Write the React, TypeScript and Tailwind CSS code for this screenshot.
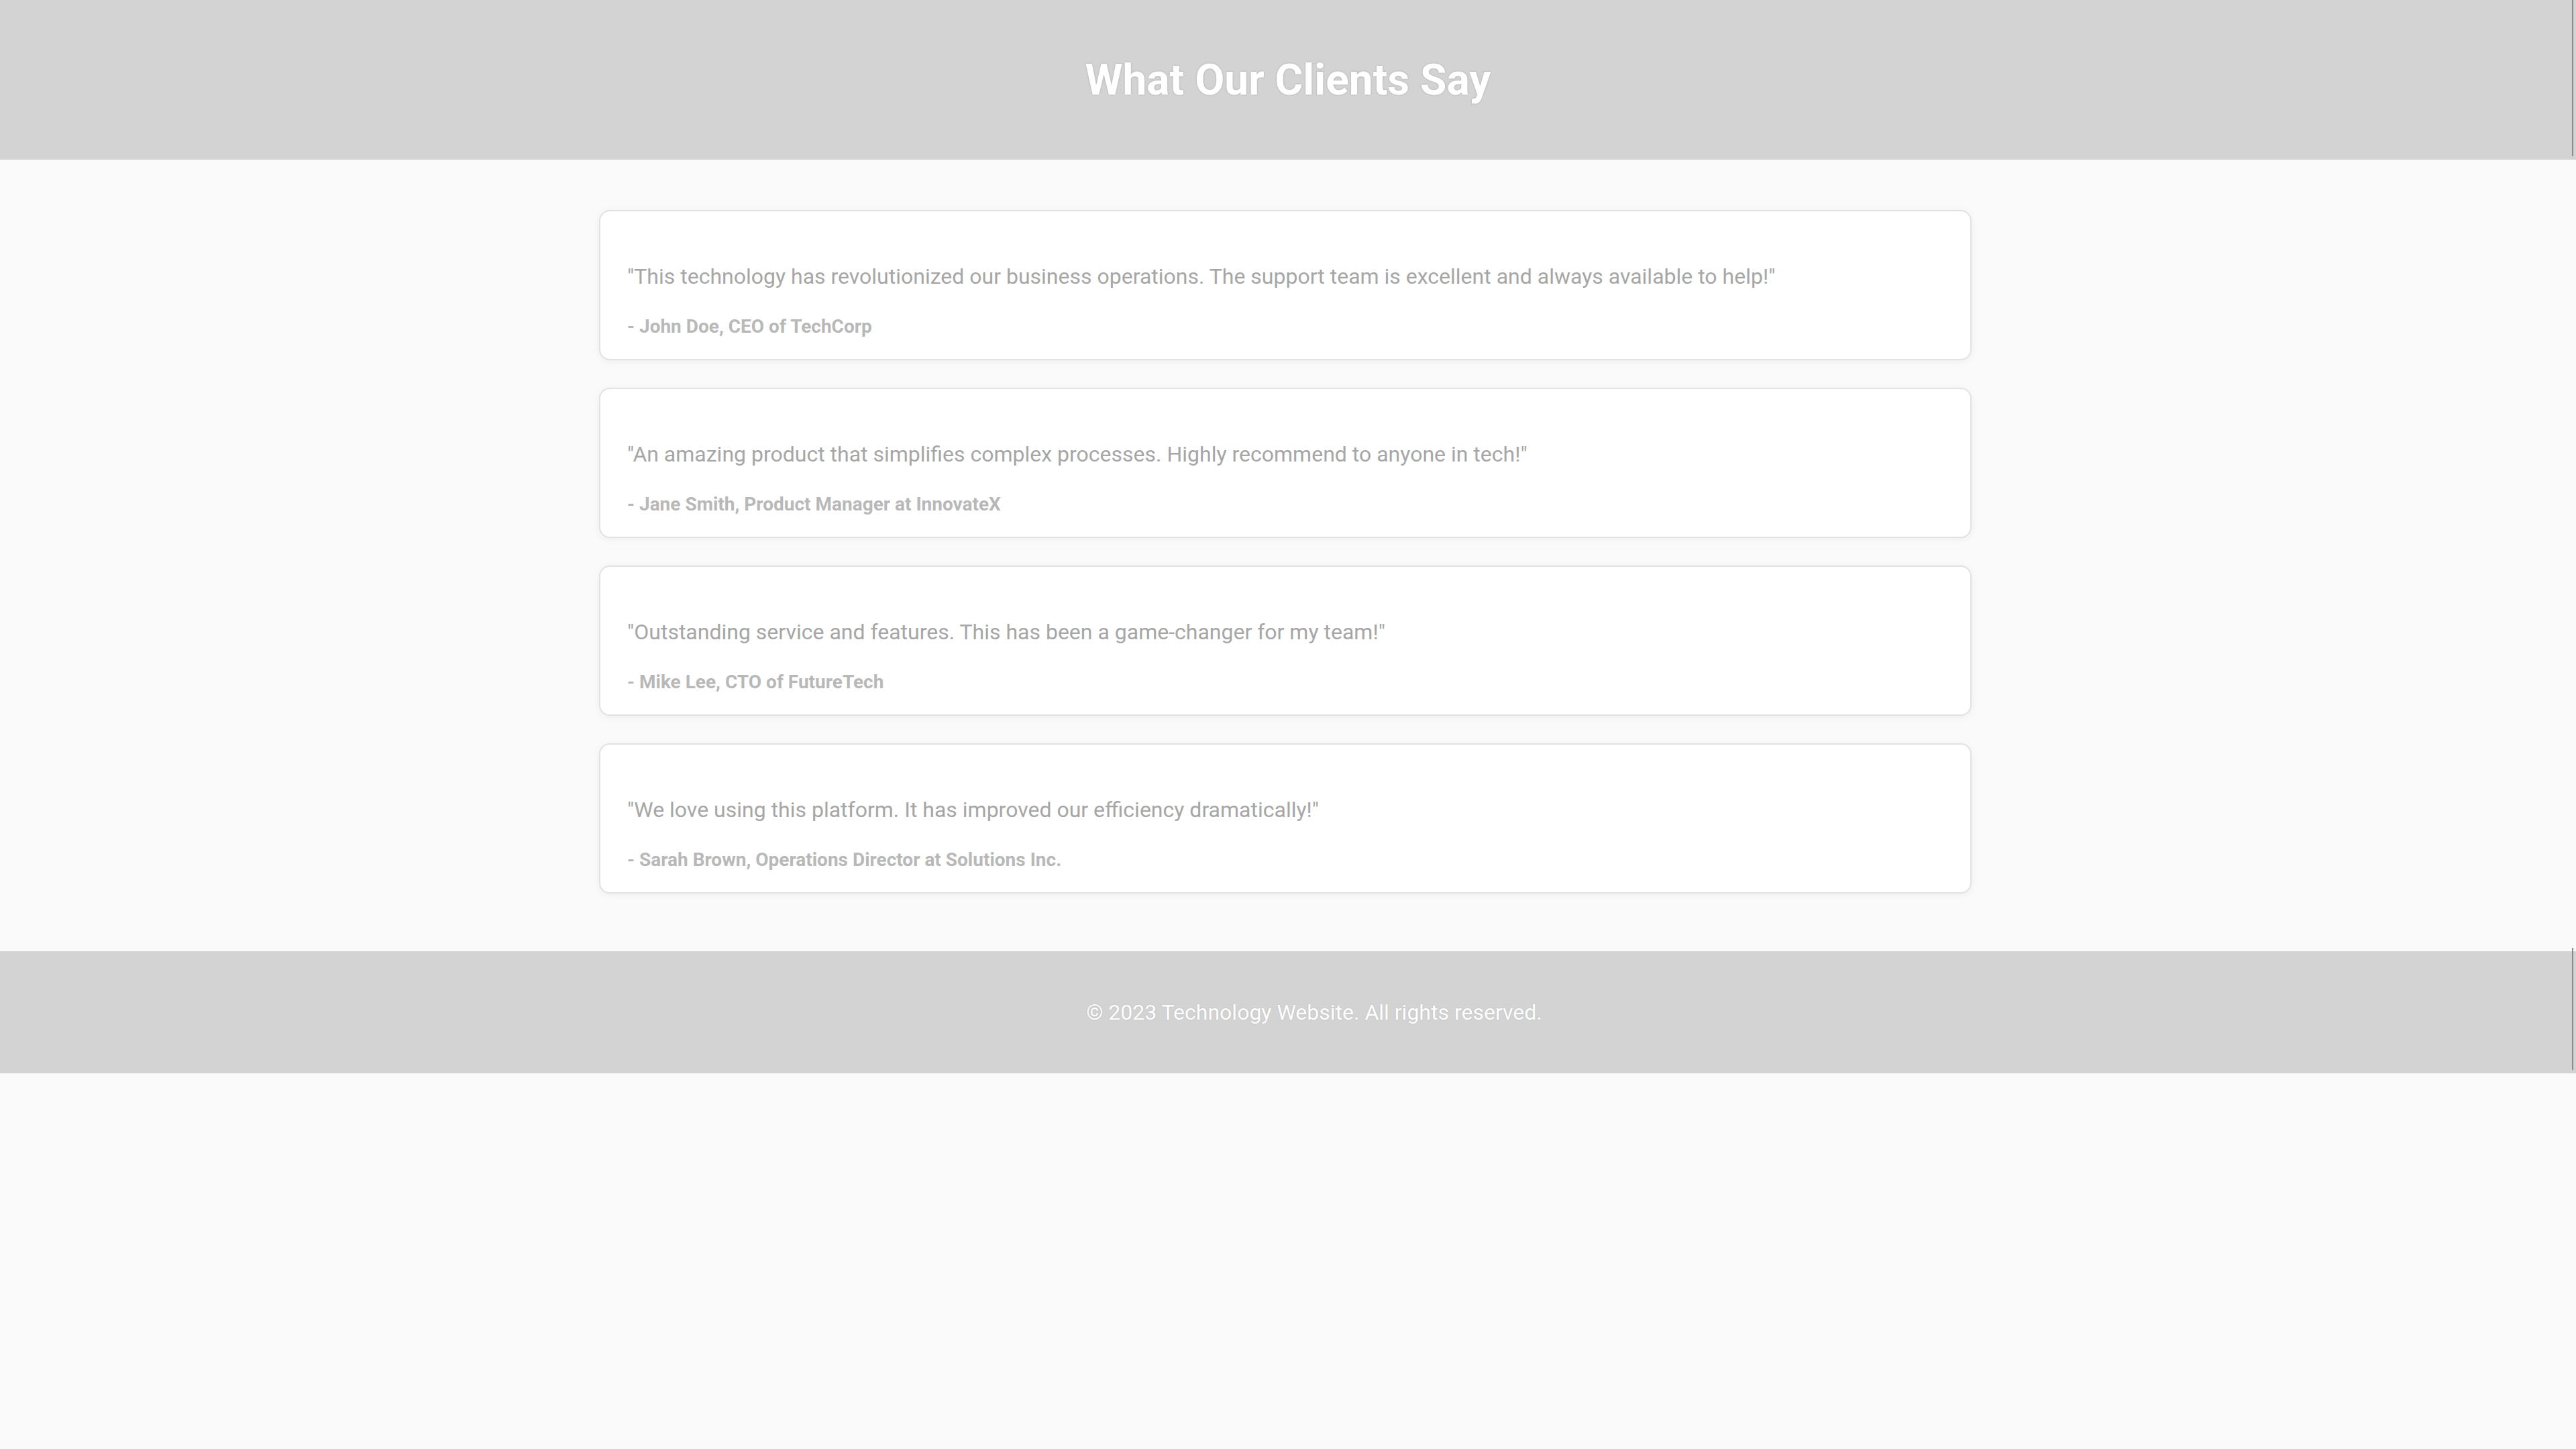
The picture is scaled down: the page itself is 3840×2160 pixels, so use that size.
import React from "react";

const testimonials = [
  {
    quote:
      '"This technology has revolutionized our business operations. The support team is excellent and always available to help!"',
    author: "- John Doe, CEO of TechCorp",
  },
  {
    quote:
      '"An amazing product that simplifies complex processes. Highly recommend to anyone in tech!"',
    author: "- Jane Smith, Product Manager at InnovateX",
  },
  {
    quote:
      '"Outstanding service and features. This has been a game-changer for my team!"',
    author: "- Mike Lee, CTO of FutureTech",
  },
  {
    quote: '"We love using this platform. It has improved our efficiency dramatically!"',
    author: "- Sarah Brown, Operations Director at Solutions Inc.",
  },
];

export default function App() {
  return (
    <div className="min-h-screen w-full bg-[#fafafa] font-['Roboto',sans-serif]">
      <header className="relative flex h-[238px] w-full items-center justify-center bg-[#d3d3d3]">
        <h1 className="text-[64px] font-bold leading-[75px] text-white [text-shadow:0_0_3px_rgba(0,0,0,0.2)]">
          What Our Clients Say
        </h1>
        <div className="absolute right-[4px] top-0 h-[233px] w-[2px] bg-[#8a8a8a]" />
      </header>

      <main className="flex w-full justify-center pr-[8px] pt-[75px] pb-[86px]">
        <div className="flex w-[2046px] flex-col gap-[41px]">
          {testimonials.map((t) => (
            <div
              key={t.author}
              className="flex h-[224px] flex-col rounded-[16px] border-2 border-[#e2e2e2] bg-white px-[40px] pt-[79px] shadow-[0_2px_12px_rgba(0,0,0,0.05)]"
            >
              <p className="text-[32px] leading-[37px] text-[#a6a6a6]">{t.quote}</p>
              <p className="mt-[39px] text-[28px] font-bold leading-[33px] text-[#b8b8b8]">
                {t.author}
              </p>
            </div>
          ))}
        </div>
      </main>

      <footer className="relative flex h-[182px] w-full items-center justify-center bg-[#d3d3d3] pl-[78px]">
        <p className="text-[32px] leading-[37px] text-white [text-shadow:0_0_2px_rgba(0,0,0,0.15)]">
          © 2023 Technology Website. All rights reserved.
        </p>
        <div className="absolute right-[4px] top-[-5px] h-[182px] w-[2px] bg-[#8a8a8a]" />
      </footer>
    </div>
  );
}
